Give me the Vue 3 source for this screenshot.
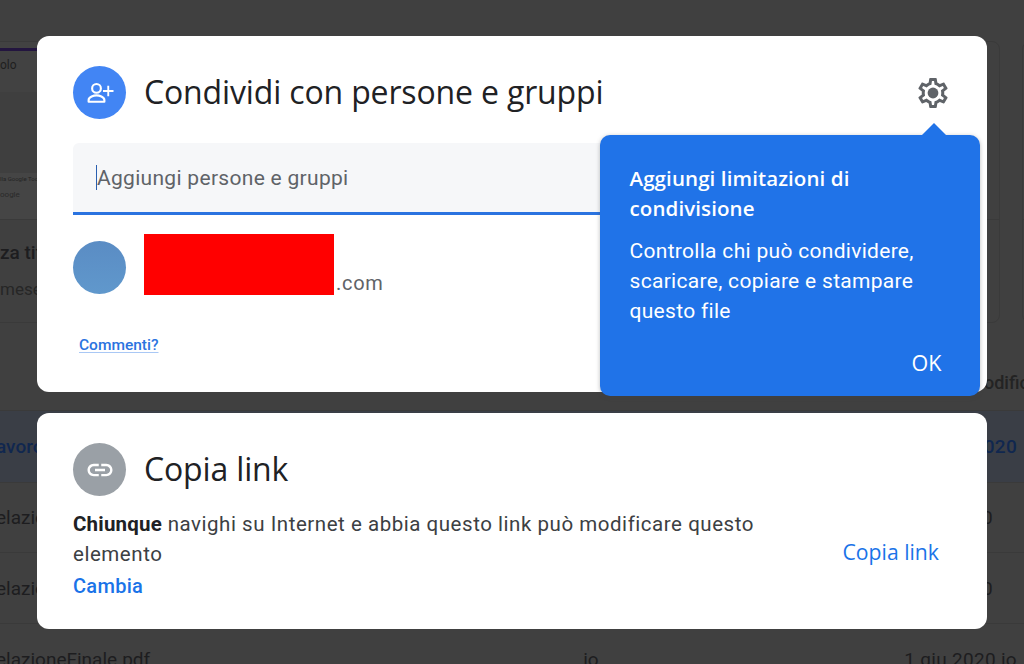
<template>
  <div class="page">
    <!-- pagina di Drive dietro al dialogo -->
    <div class="backdrop">
      <div class="recent">
        <div class="doc" v-for="doc in docs" :key="doc.id">
          <div class="preview">
            <div class="preview-top">
              <div class="purple" v-if="doc.word"></div>
              <span class="doc-word">{{ doc.word }}</span>
            </div>
            <div class="preview-mid"></div>
            <div class="preview-bottom">
              <span class="tiny">{{ doc.tiny }}</span>
              <span class="tiny2">{{ doc.tiny2 }}</span>
            </div>
          </div>
          <div class="doc-meta">
            <span class="meta-title">{{ doc.title }}</span>
            <span class="meta-sub">{{ doc.sub }}</span>
          </div>
        </div>
      </div>
      <div class="list-head"><span>odifica</span></div>
      <div class="row selected"><span class="name blue">avoro</span><span class="date far blue">1 giu 2020</span></div>
      <div class="row second"><span class="name">elazione</span><span class="date">1 giu 2020</span></div>
      <div class="row"><span class="name">elazione</span><span class="date">1 giu 2020</span></div>
      <div class="row"><span class="name">elazioneFinale.pdf</span><span class="owner">io</span><span class="date far">1 giu 2020 io</span></div>
    </div>

    <!-- dialogo -->
    <div class="dialogs">
      <section class="card share">
        <header class="head">
          <div class="circle person">
            <svg width="30" height="30" viewBox="0 0 24 24" fill="none" stroke="#fff" stroke-width="1.7">
              <circle cx="9.2" cy="8.3" r="3.5" />
              <path d="M2.9 19v-1.5c0-2.3 4.2-3.6 6.3-3.6s6.3 1.3 6.3 3.6V19z" stroke-linejoin="round" />
              <path d="M18.6 6.2v8.4M14.4 10.4h8.4" stroke-width="1.5" />
            </svg>
          </div>
          <h1>Condividi con persone e gruppi</h1>
          <svg class="gear" width="36" height="36" viewBox="0 0 24 24" fill="#5f6368">
            <path d="M19.43 12.98c.04-.32.07-.64.07-.98s-.03-.66-.07-.98l2.11-1.65c.19-.15.24-.42.12-.64l-2-3.46c-.12-.22-.39-.3-.61-.22l-2.49 1c-.52-.4-1.08-.73-1.69-.98l-.38-2.65C14.46 2.18 14.25 2 14 2h-4c-.25 0-.46.18-.49.42l-.38 2.65c-.61.25-1.17.59-1.69.98l-2.49-1c-.23-.09-.49 0-.61.22l-2 3.46c-.13.22-.07.49.12.64l2.11 1.65c-.04.32-.07.65-.07.98s.03.66.07.98l-2.11 1.65c-.19.15-.24.42-.12.64l2 3.46c.12.22.39.3.61.22l2.49-1c.52.4 1.08.73 1.69.98l.38 2.65c.03.24.24.42.49.42h4c.25 0 .46-.18.49-.42l.38-2.65c.61-.25 1.17-.59 1.69-.98l2.49 1c.23.09.49 0 .61-.22l2-3.46c.12-.22.07-.49-.12-.64l-2.11-1.65zM17.45 11.27c.04.31.05.52.05.73 0 .21-.02.43-.05.73l-.14 1.13.89.7 1.08.84-.7 1.21-1.27-.51-1.04-.42-.9.68c-.43.32-.84.56-1.25.73l-1.06.43-.16 1.13-.2 1.35h-1.4l-.19-1.35-.16-1.13-1.06-.43c-.43-.18-.83-.41-1.23-.71l-.91-.7-1.06.43-1.27.51-.7-1.21 1.08-.84.89-.7-.14-1.13c-.03-.31-.05-.54-.05-.74s.02-.43.05-.73l.14-1.13-.89-.7-1.08-.84.7-1.21 1.27.51 1.04.42.9-.68c.43-.32.84-.56 1.25-.73l1.06-.43.16-1.13.2-1.35h1.39l.19 1.35.16 1.13 1.06.43c.43.18.83.41 1.23.71l.91.7 1.06-.43 1.27-.51.7 1.21-1.07.85-.89.7.14 1.13z" />
            <circle cx="12" cy="12" r="3.6" />
          </svg>
        </header>

        <div class="field">
          <span class="caret"></span>
          <span class="placeholder">Aggiungi persone e gruppi</span>
        </div>

        <div class="person-row">
          <div class="avatar"></div>
          <div class="mail"><span class="redact"></span><span class="domain">.com</span></div>
        </div>

        <a class="feedback">Commenti?</a>
      </section>

      <section class="card link">
        <header class="head">
          <div class="circle grey">
            <svg width="30" height="30" viewBox="0 0 24 24" fill="#fff">
              <path d="M3.9 12c0-1.71 1.39-3.1 3.1-3.1h4V7H7c-2.76 0-5 2.24-5 5s2.24 5 5 5h4v-1.9H7c-1.71 0-3.1-1.39-3.1-3.1zM8 13h8v-2H8v2zm9-6h-4v1.9h4c1.71 0 3.1 1.39 3.1 3.1s-1.39 3.1-3.1 3.1h-4V17h4c2.76 0 5-2.24 5-5s-2.24-5-5-5z" />
            </svg>
          </div>
          <h2>Copia link</h2>
        </header>
        <div class="link-body">
          <div class="link-text">
            <p><strong>Chiunque</strong> navighi su Internet e abbia questo link può modificare questo elemento</p>
            <a class="change">Cambia</a>
          </div>
          <a class="copy">Copia link</a>
        </div>
      </section>
    </div>

    <!-- suggerimento -->
    <aside class="tip">
      <span class="arrow"></span>
      <h3>Aggiungi limitazioni di condivisione</h3>
      <p>Controlla chi può condividere, scaricare, copiare e stampare questo file</p>
      <div class="tip-foot"><button>OK</button></div>
    </aside>
  </div>
</template>

<script setup>
// card dei file recenti, quasi del tutto coperte dal dialogo
const docs = [
  { id: 1, word: 'olo', tiny: 'lla Google Tools', tiny2: 'oogle', title: 'za titolo', sub: 'mese fa' },
  { id: 2, word: '', tiny: '', tiny2: '', title: '', sub: '' },
  { id: 3, word: '', tiny: '', tiny2: '', title: '', sub: '' },
  { id: 4, word: '', tiny: '', tiny2: '', title: '', sub: '' }
]
</script>

<style>
html, body {
  margin: 0;
  background: #404040;
}
</style>

<style scoped>
.page {
  position: relative;
  width: 1024px;
  height: 664px;
  overflow: hidden;
  background: #404040;
  font-family: Roboto, "Liberation Sans", sans-serif;
}

/* sfondo */
.backdrop {
  display: flex;
  flex-direction: column;
  height: 100%;
  color: #1d1d1f;
}
.recent {
  flex: none;
  display: grid;
  grid-template-columns: 296px 330px 330px 330px;
  column-gap: 22px;
  padding-top: 41px;
}
.doc {
  height: 282px;
  box-sizing: border-box;
  border: 1px solid #3a3a3a;
  border-radius: 8px;
}
.doc:first-child {
  border-left: 0;
  border-radius: 0 8px 8px 0;
}
.preview {
  height: 177px;
  border-bottom: 1px solid #3a3a3a;
  display: flex;
  flex-direction: column;
}
.preview-top {
  height: 50px;
}
.doc:first-child .preview-top {
  background: #424242;
}
.purple {
  height: 3px;
  margin-top: 6px;
  background: #23153f;
}
.doc-word {
  display: block;
  font-size: 12px;
  color: #1f1f1f;
  margin-top: 7px;
}
.preview-mid {
  flex: 1;
}
.doc:first-child .preview-mid {
  background: #3f3f3f;
}
.preview-bottom {
  height: 46px;
  display: flex;
  flex-direction: column;
  padding-top: 2px;
  box-sizing: border-box;
  white-space: nowrap;
}
.doc:first-child .preview-bottom {
  background: #454545;
}
.tiny {
  font-size: 6px;
  color: #242424;
}
.tiny2 {
  font-size: 8px;
  color: #2a2a2a;
  margin-top: 8px;
}
.doc-meta {
  display: flex;
  flex-direction: column;
  gap: 15px;
  padding-top: 21px;
  white-space: nowrap;
}
.meta-title {
  font-weight: 500;
  font-size: 19px;
}
.meta-sub {
  font-size: 17px;
  color: #262626;
}
.list-head {
  flex: none;
  height: 88px;
  box-sizing: border-box;
  padding: 49px 0 0 984px;
  border-bottom: 1px solid #3a3a3a;
  color: #232323;
  font-size: 18px;
  font-weight: 500;
  white-space: nowrap;
}
.row {
  flex: none;
  height: 71px;
  box-sizing: border-box;
  display: flex;
  align-items: center;
  justify-content: space-between;
  padding-right: 31px;
  border-bottom: 1px solid #3a3a3a;
  white-space: nowrap;
  font-size: 19px;
}
.row.second {
  height: 70px;
}
.row.selected {
  height: 72px;
  background: #3a3e46;
}
.name {
  margin-left: -4px;
}
.blue {
  color: #10274f;
  font-weight: 500;
}
.owner {
  margin-left: 433px;
  margin-right: auto;
}
.date {
  letter-spacing: 0.3px;
}
.date.far {
  margin-right: -24px;
}

/* dialoghi */
.dialogs {
  position: absolute;
  left: 37px;
  top: 36px;
  width: 950px;
  display: flex;
  flex-direction: column;
  gap: 21px;
}
.card {
  background: #fff;
  border-radius: 12px;
  box-sizing: border-box;
  padding: 30px 36px 0;
}
.share {
  height: 356px;
}
.link {
  height: 216px;
}
.head {
  display: flex;
  align-items: center;
  gap: 18px;
}
.circle {
  width: 53px;
  height: 53px;
  border-radius: 50%;
  flex: none;
  display: flex;
  align-items: center;
  justify-content: center;
}
.person {
  background: #4285f4;
}
.grey {
  background: #9aa0a6;
}
h1, h2 {
  margin: 0 0 3px;
  font-family: "Open Sans", sans-serif;
  font-weight: 400;
  font-size: 32px;
  letter-spacing: -0.15px;
  color: #202124;
  flex: 1;
}
.gear {
  flex: none;
}
.field {
  margin-top: 24px;
  height: 72px;
  background: #f6f7f9;
  border-radius: 6px 6px 0 0;
  border-bottom: 3px solid #2a73e0;
  box-sizing: border-box;
  display: flex;
  align-items: center;
  padding-left: 23px;
}
.caret {
  width: 1px;
  height: 25px;
  background: #2a5fb0;
}
.placeholder {
  font-size: 21px;
  color: #5f6368;
  letter-spacing: 0.3px;
  margin-top: 1px;
}
.person-row {
  display: flex;
  align-items: flex-start;
  gap: 18px;
  margin-top: 19px;
}
.avatar {
  width: 53px;
  height: 53px;
  margin-top: 7px;
  border-radius: 50%;
  background: linear-gradient(#5a8cc4, #6098cc);
}
.mail {
  display: flex;
  align-items: flex-end;
}
.redact {
  display: block;
  width: 190px;
  height: 61px;
  background: #ff0000;
}
.domain {
  font-size: 20px;
  color: #5f6368;
  margin-left: 2px;
  letter-spacing: 0.7px;
}
.feedback {
  display: inline-block;
  margin: 41px 0 0 6px;
  color: #2a73e0;
  font-size: 15.5px;
  font-weight: 500;
  text-decoration: underline;
  text-decoration-color: #a9c8f5;
  text-underline-offset: 2px;
}
.link-body {
  display: flex;
  align-items: center;
  justify-content: space-between;
  margin-top: 13px;
}
.link-text {
  width: 700px;
}
.link-text p {
  margin: 0;
  font-size: 20.5px;
  letter-spacing: 0.54px;
  line-height: 30px;
  color: #3c4043;
}
.link-text strong {
  color: #202124;
  font-weight: 700;
  letter-spacing: 0.2px;
}
.change {
  display: block;
  margin-top: 5px;
  color: #1a73e8;
  font-size: 20px;
  font-weight: 500;
  letter-spacing: 0.3px;
}
.copy {
  color: #1a73e8;
  font-family: "Open Sans", sans-serif;
  font-size: 21.2px;
  margin-right: 12px;
  margin-top: -4px;
}

/* suggerimento */
.tip {
  position: absolute;
  left: 599.5px;
  top: 135px;
  width: 380px;
  height: 261px;
  box-sizing: border-box;
  background: #2073e8;
  border-radius: 10px;
  padding: 28px 30px 0;
  color: #fff;
  box-shadow: 0 1px 4px rgba(60, 64, 67, 0.35);
}
.arrow {
  position: absolute;
  top: -12px;
  left: 321px;
  width: 0;
  height: 0;
  border: 13px solid transparent;
  border-top: 0;
  border-bottom: 13px solid #2073e8;
}
.tip h3 {
  margin: 0;
  width: 300px;
  font-family: "Open Sans", sans-serif;
  font-size: 20.5px;
  letter-spacing: 0.1px;
  line-height: 30px;
  font-weight: 600;
}
.tip p {
  margin: 13px 0 0;
  font-size: 21px;
  letter-spacing: 0.3px;
  line-height: 30px;
}
.tip-foot {
  display: flex;
  justify-content: flex-end;
  margin-top: 22px;
}
.tip-foot button {
  background: none;
  border: none;
  color: #fff;
  font-family: "Open Sans", sans-serif;
  font-size: 21.5px;
  padding: 0;
  margin-right: 8px;
}
</style>
